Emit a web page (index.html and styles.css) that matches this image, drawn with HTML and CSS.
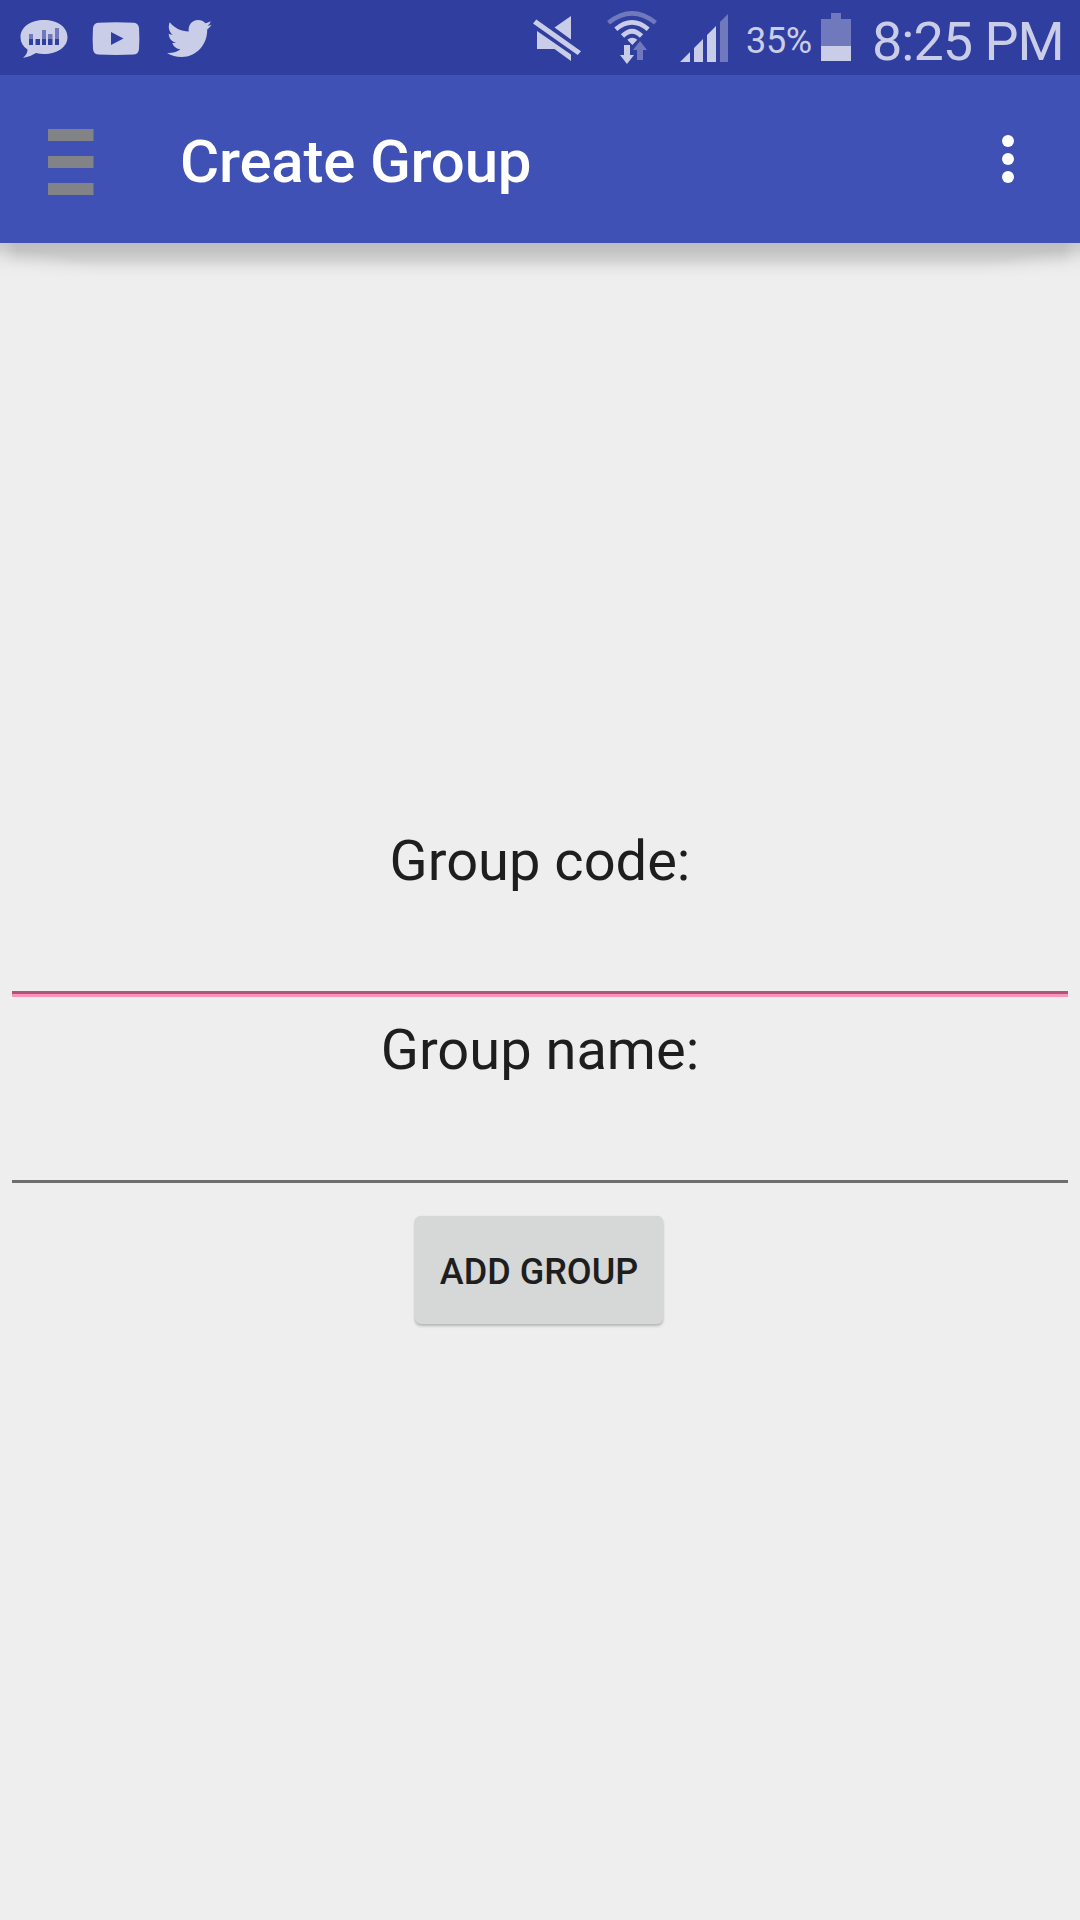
FILE: index.html
```html
<!DOCTYPE html>
<html lang="en">
<head>
<meta charset="utf-8">
<title>Create Group</title>
<link rel="stylesheet" href="styles.css">
</head>
<body>
<div class="status-bar">
  <svg class="icon-chat" viewBox="20 0 50 75" width="50" height="75">
    <path class="lit" d="M44 20C57.500 20 67.500 27 67.500 37S57.500 54 44 54Q39.500 54 36 53Q30 57 23 58Q27.500 54 27.500 49.500Q20.500 45 20.500 37C20.500 27 30.500 20 44 20Z"/>
    <path class="dim" d="M29 34h4v5h-4zM42 30h4v9h-4zM48 34h4.500v5H48zM55 28h4v11h-4z"/>
    <path class="ink" d="M29 39h4v6h-4zM35.500 39h4.500v6h-4.500zM42 39h4v6h-4zM48 39h4.500v6H48zM55 39h4v6h-4z"/>
  </svg>
  <svg class="icon-video" viewBox="92 0 48 75" width="48" height="75">
    <path class="lit" d="M98 22.800Q116 21.800 134 22.800Q138.500 23.500 139 28Q139.700 38.500 139 49Q138.500 54 134 54.500Q116 55.400 98 54.500Q93.500 54 93 49Q92.300 38.500 93 28Q93.500 23.500 98 22.800Z"/>
    <path class="ink" d="M111 32v13l12.500-6.500z"/>
  </svg>
  <svg class="icon-bird" viewBox="166 0 46 75" width="46" height="75">
    <path class="lit" d="M169.800 22.200C174 27.500 181 31.500 188.700 31.500C188 25 192 20 198 20C201 20 203.500 21.200 205.300 23.200Q208 22.700 210.800 21.200Q210 24 207.500 25.800Q209.500 25.600 211.500 24.700Q210 27.500 207.200 29.500C207.500 44 197 57 181.500 57Q173.500 57 167 53Q174.500 53.500 180.500 49.200C176.500 49 173.500 46.500 172.300 43Q174 43.300 176 42.800C171.500 41.500 168.800 38 168.700 33.700Q170.500 34.700 172.800 34.800C169 32 167.700 26.500 169.800 22.200Z"/>
  </svg>
  <span class="spacer"></span>
  <svg class="icon-mute" viewBox="532 0 50 75" width="50" height="75">
    <path class="lit" d="M571 16v23.500L554.500 27.500zM537 31l34 23.500V61L554.500 49H537zM536.300 19.500L581 51.300L577.700 55L533 23.500z"/>
  </svg>
  <svg class="icon-wifi" viewBox="606 0 52 75" width="52" height="75">
    <g fill="none" stroke-width="4.600">
      <path class="dim-line" d="M608.500 22.800Q632 4 655.500 22.800"/>
      <path class="lit-line" d="M615.800 29.200Q632 15.500 648.200 29.200"/>
      <path class="lit-line" d="M622.500 36Q632 26.500 641.500 36"/>
    </g>
    <path class="lit" d="M632.300 45l-5-5.200q5-4 10 0zM624 45h6v10h4l-7 9-7-9h4z"/>
    <path class="dim" d="M640 41l7 9h-4v10h-6V50h-4z"/>
  </svg>
  <svg class="icon-signal" viewBox="680 0 48 75" width="48" height="75">
    <path class="lit" d="M680 62l10-10v10zM694 62V48l9-9v23zM707 62V35l9-9v36z"/>
    <path class="dim" d="M720 62V22l8-8v48z"/>
  </svg>
  <span class="percent">35%</span>
  <svg class="icon-battery" viewBox="821 0 30 75" width="30" height="75">
    <path class="dim" d="M821 19h10v-6h10v6h10v27h-30z"/>
    <path class="lit" d="M821 46h30v15h-30z"/>
  </svg>
  <span class="clock">8:25 PM</span>
</div>
<header class="app-bar">
  <svg class="menu" viewBox="0 0 46 67" width="46" height="67">
    <path d="M0 1h45.500v12H0zM0 28h45.500v12H0zM0 55h45.500V67H0z"/>
  </svg>
  <h1 class="title">Create Group</h1>
  <svg class="more" viewBox="0 0 12 48" width="12" height="48">
    <circle cx="6" cy="6" r="6"/><circle cx="6" cy="24" r="6"/><circle cx="6" cy="42" r="6"/>
  </svg>
</header>
<main class="content">
  <div class="shade"></div>
  <form class="form">
    <label class="label" for="code">Group code:</label>
    <input class="field field-active" id="code" type="text">
    <label class="label" for="name">Group name:</label>
    <input class="field" id="name" type="text">
    <button class="submit" type="button">ADD GROUP</button>
  </form>
</main>
</body>
</html>
```
FILE: styles.css
```css
* { box-sizing: border-box; }
body {
  margin: 0;
  height: 1920px;
  display: flex;
  flex-direction: column;
  overflow: hidden;
  background: #eee;
  color: #1e1e1e;
  font-family: Roboto, sans-serif;
}
svg { display: block; flex: none; }
.status-bar {
  height: 75px;
  flex: none;
  display: flex;
  padding: 0 16px 0 20px;
  background: #303f9f;
  color: #cacde7;
  white-space: nowrap;
}
.lit { fill: #cacde7; }
.dim { fill: #7079bc; }
.ink { fill: #303f9f; }
.lit-line { stroke: #cacde7; }
.dim-line { stroke: #7079bc; }
.icon-video { margin-left: 22px; }
.icon-bird { margin-left: 26px; }
.spacer { flex: 1; }
.icon-wifi { margin-left: 24px; }
.icon-signal { margin-left: 22px; }
.percent { width: 93px; padding-left: 18px; font-size: 36px; line-height: 82px; letter-spacing: -.3px; }
.clock { width: 213px; padding-left: 21px; font-size: 54px; line-height: 83px; letter-spacing: -1px; }
.app-bar {
  height: 168px;
  flex: none;
  display: flex;
  align-items: flex-start;
  padding: 0 66px 0 48px;
  background: #3f51b5;
}
.menu { margin-top: 53px; fill: #828386; }
.title {
  flex: 1;
  margin: 0 0 0 86px;
  font-size: 60px;
  line-height: 173px;
  font-weight: 500;
  letter-spacing: -.2px;
  color: #fff;
}
.more { margin-top: 60px; fill: #fff; }
.content { flex: 1; }
.shade {
  height: 34px;
  background:
    radial-gradient(ellipse 100px 27px at 0 100%, rgba(238,238,238,.75), rgba(238,238,238,.5) 50%, rgba(238,238,238,0)),
    radial-gradient(ellipse 100px 27px at 100% 100%, rgba(238,238,238,.75), rgba(238,238,238,.5) 50%, rgba(238,238,238,0)),
    radial-gradient(ellipse 18px 34px at 0 50%, rgba(238,238,238,.5), rgba(238,238,238,0)),
    radial-gradient(ellipse 18px 34px at 100% 50%, rgba(238,238,238,.5), rgba(238,238,238,0)),
    linear-gradient(#bebebe, #c4c4c4 8px, #d2d2d2 17px, #e5e5e5 25px, #eee);
}
.form {
  display: flex;
  flex-direction: column;
  align-items: center;
  padding: 550px 12px 0;
}
.label { height: 67px; line-height: 69px; font-size: 56px; }
.field {
  width: 1056px;
  height: 100px;
  margin-bottom: 22px;
  padding: 0;
  border: 0;
  border-bottom: 3px solid #6e6e6e;
  background: none;
  font: 54px Roboto, sans-serif;
  outline: 0;
}
.field-active { border-color: #b15578; box-shadow: 0 3px #fa94b8; }
.submit {
  width: 248px;
  height: 108px;
  margin: 11px 2px 0 0;
  padding: 3px 0 0;
  border: 0;
  border-radius: 6px;
  background: #d6d8d7;
  box-shadow: 0 2px 3px rgba(0,0,0,.24), 0 0 1px rgba(0,0,0,.12);
  color: #1e1e1e;
  font: 500 36px Roboto, sans-serif;
}
```
